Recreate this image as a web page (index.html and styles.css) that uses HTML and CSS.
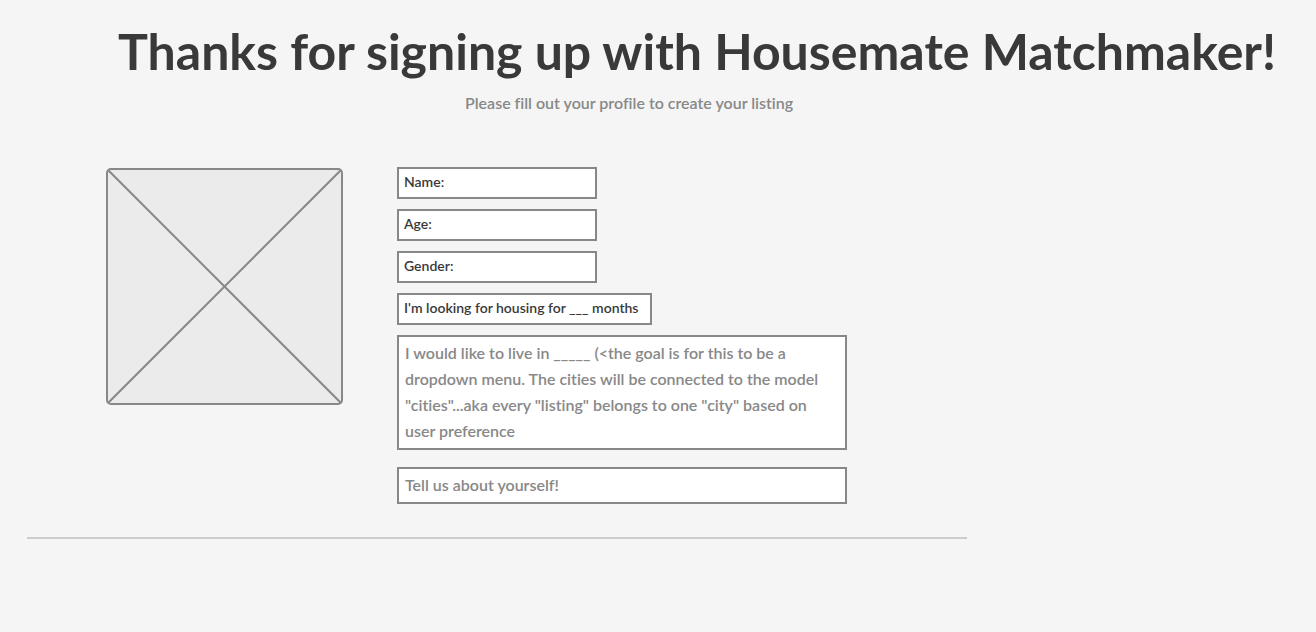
FILE: index.html
```html
<!DOCTYPE html>
<html lang="en">
<head>
<meta charset="utf-8">
<meta name="viewport" content="width=device-width, initial-scale=1">
<title>Housemate Matchmaker</title>
<link rel="stylesheet" href="styles.css">
</head>
<body>
<header class="intro">
  <h1 class="title">Thanks for signing up with Housemate Matchmaker!</h1>
  <p class="subtitle">Please fill out your profile to create your listing</p>
</header>
<main class="profile">
  <svg class="photo" viewBox="0 0 237 237" role="img" aria-label="Profile photo placeholder">
    <rect x="1" y="1" width="235" height="235" rx="4"/>
    <path d="M2 2 235 235M235 2 2 235"/>
  </svg>
  <form class="fields">
    <input class="field short" type="text" aria-label="Name" value="Name:">
    <input class="field short" type="text" aria-label="Age" value="Age:">
    <input class="field short" type="text" aria-label="Gender" value="Gender:">
    <input class="field medium" type="text" aria-label="Months of housing" value="I'm looking for housing for ___ months">
    <textarea class="field long" rows="4" aria-label="City">I would like to live in _____ (&lt;the goal is for this to be a
dropdown menu. The cities will be connected to the model
"cities"...aka every "listing" belongs to one "city" based on
user preference</textarea>
    <textarea class="field long about" rows="1" aria-label="About you">Tell us about yourself!</textarea>
  </form>
</main>
<hr class="divider">
</body>
</html>
```
FILE: styles.css
```css
* {
  box-sizing: border-box;
}

body {
  margin: 0;
  background: #f5f5f5;
  color: #393939;
  font-family: Lato, "Open Sans", sans-serif;
  font-variant-ligatures: none;
}

.intro {
  padding: 21px 32px 0 118px;
}

.title {
  margin: 0;
  font-size: 50px;
  font-weight: 700;
  line-height: 60px;
  white-space: nowrap;
}

.subtitle {
  margin: 10px 0 0 347px;
  color: #888;
  font-size: 16px;
  font-weight: 600;
  line-height: 24px;
}

.profile {
  display: flex;
  align-items: flex-start;
  gap: 54px;
  padding: 52px 32px 0 106px;
}

.photo {
  flex: none;
  width: 237px;
  margin-top: 1px;
  fill: #ebebeb;
  stroke: #888;
  stroke-width: 2;
}

.fields {
  display: flex;
  flex: 0 1 450px;
  flex-direction: column;
  align-items: flex-start;
  gap: 10px;
}

.field {
  display: block;
  height: 32px;
  margin: 0;
  padding: 0 5px 3px;
  border: 2px solid #888;
  border-radius: 0;
  background: #fff;
  color: #393939;
  font-family: inherit;
  font-size: 14px;
  font-variant-ligatures: none;
  font-weight: 600;
}

.short {
  width: 200px;
}

.medium {
  width: 255px;
}

.long {
  width: 100%;
  height: auto;
  padding: 3px 6px 4px;
  overflow: hidden;
  color: #888;
  font-size: 16px;
  line-height: 26px;
  resize: none;
}

.about {
  margin-top: 7px;
}

.divider {
  width: 940px;
  max-width: calc(100% - 54px);
  height: 2px;
  margin: 33px 27px 0;
  border: 0;
  background: #ccc;
}
```
